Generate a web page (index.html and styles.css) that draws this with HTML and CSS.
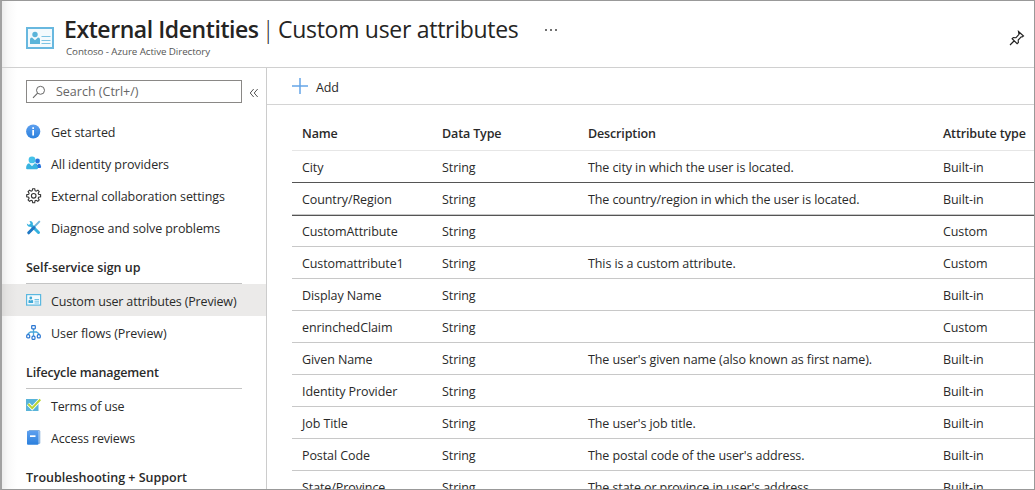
FILE: index.html
```html
<!DOCTYPE html>
<html lang="en">
<head>
<meta charset="utf-8">
<title>External Identities | Custom user attributes</title>
<link rel="stylesheet" href="styles.css">
</head>
<body>
<div class="window">
  <header class="header">
    <svg class="header-icon" viewBox="0 0 28 22"><rect x="1" y="1" width="26" height="20" fill="#f3fafd" stroke="#68b8df" stroke-width="2"/><circle cx="9" cy="7.500" r="2.700" fill="#59b4d9"/><path d="M4 17v-4.500q0-2 2-2l3 2.700 3-2.700q2 0 2 2V17z" fill="#59b4d9"/><path d="M15.500 9.500h9M15.500 13.500h9M15.500 16.500h9" stroke="#7cc3e3" stroke-width="1.200"/></svg>
    <div class="titles">
      <h1 class="title"><span class="title-main">External Identities</span><span class="title-bar">|</span><span class="title-sub">Custom user attributes</span></h1>
      <div class="subtitle">Contoso - Azure Active Directory</div>
    </div>
    <svg class="more" viewBox="0 0 14 4"><path d="M1 1.200h2v1.500H1zM6 1.200h2v1.500H6zM11 1.200h2v1.500h-2z" fill="#444"/></svg>
    <svg class="pin" viewBox="0 0 16 16"><path d="M9.500 1.500l5 4.500-1.300 1-1-.2-3 3.200.2 2.500-1.300 1.200-5-5 1.200-1.200 2.700.2 3-3.300-.3-1.500zM5.500 10.500L1 15" fill="none" stroke="#222" stroke-width="1.150"/></svg>
  </header>
  <div class="body">
    <nav class="sidebar">
      <div class="search-row">
        <div class="search"><svg class="search-icon" viewBox="0 0 14 14"><circle cx="8.500" cy="5.300" r="4" fill="none" stroke="#666" stroke-width="1"/><path d="M5.600 8.200L1 12.800" stroke="#666" stroke-width="1.100"/></svg><span class="placeholder">Search (Ctrl+/)</span></div>
        <svg class="collapse" viewBox="0 0 10 10"><path d="M4.700 1L1.200 5l3.500 4M8.700 1L5.200 5l3.500 4" fill="none" stroke="#555" stroke-width="1"/></svg>
      </div>
      <ul class="menu">
        <li class="item"><svg class="icon" viewBox="0 0 16 16"><defs><linearGradient id="blue" x2="0" y2="1"><stop stop-color="#5ea0ef"/><stop offset="1" stop-color="#2b80dd"/></linearGradient></defs><circle cx="7.200" cy="7.500" r="7.100" fill="url(#blue)"/><path d="M6.300 3.300h1.700V5H6.300zM6.300 6h1.700v5.500H6.300z" fill="#fff"/></svg><span>Get started</span></li>
        <li class="item"><svg class="icon" viewBox="0 0 16 16"><circle cx="11.500" cy="5" r="2.400" fill="#2874dd"/><path d="M8 12V10q.4-2.300 2.300-2.500l1.200 1.500L12.800 7.500q2 .2 2.300 3v.5q0 1-1 1z" fill="#2874dd"/><circle cx="6" cy="3.900" r="3.400" fill="#45c1e8"/><path d="M.1 12.200q0-4.200 3-5L6 10l2.800-2.800q2.900.8 3.100 5 0 1-1 1H1.100q-1 0-1-1z" fill="#39b3e0"/><path d="M4.400 7.500L6 10l1.600-2.500z" fill="#d9f4fc"/></svg><span>All identity providers</span></li>
        <li class="item"><svg class="icon" viewBox="0 0 16 16"><path d="M6.700.7h2l.4 2 1 .5 1.800-1 1.300 1.300-1 1.800.4 1 2 .5v2l-2 .4-.4 1 1 1.700-1.400 1.400-1.700-1-1 .4-.4 2h-2l-.5-2-1-.4-1.700 1-1.400-1.400 1-1.700-.4-1-2-.4v-2l2-.5.4-1-1-1.800 1.400-1.300 1.700 1 1-.5z" fill="none" stroke="#333" stroke-width="1.100"/><circle cx="7.700" cy="7.800" r="2.300" fill="none" stroke="#333" stroke-width="1.100"/></svg><span>External collaboration settings</span></li>
        <li class="item"><svg class="icon" viewBox="0 0 16 16"><path d="M5 5l7.500 7.500" stroke="#35b1df" stroke-width="3" stroke-linecap="round"/><path d="M3.500 1q3.200-.2 3.500 3L4.500 6.800Q1.100 6.800.8 3.400l2.200 1.500 1.700-1.200z" fill="#35b1df"/><path d="M13.800 1.200L7.500 7.500" stroke="#71b6dc" stroke-width="1.900"/><path d="M8 7.500l-5.300 5.300" stroke="#1f78c4" stroke-width="3" stroke-linecap="round"/></svg><span>Diagnose and solve problems</span></li>
      </ul>
      <h2 class="group group-self">Self-service sign up</h2>
      <ul class="menu menu-sub">
        <li class="item active"><svg class="icon" viewBox="0 0 16 16"><rect x=".6" y="1.600" width="14" height="10.500" fill="#f3fafd" stroke="#5bb8e0" stroke-width="1.200"/><circle cx="4.800" cy="5" r="1.400" fill="#3fa9d6"/><path d="M2.500 10V7.500l1.200-.8 1.100 1 1.100-1 1.200.8V10z" fill="#3fa9d6"/><path d="M8.500 6.500h4.500M8.500 8.200h4.500M8.500 10h4.500" stroke="#6dc1e5"/></svg><span class="narrow">Custom user attributes (Preview)</span></li>
        <li class="item"><svg class="icon" viewBox="0 0 16 16"><path d="M7.500 4v7M2.200 10V8.700L4.500 7h6l2.300 1.700V10" fill="none" stroke="#49a7dc" stroke-width="1.300"/><g fill="#fff" stroke="#2b77d2" stroke-width="1.200"><rect x="5.700" y=".6" width="3.600" height="3.200" rx=".5"/><rect x=".7" y="9.700" width="3" height="3.200" rx="1"/><rect x="6" y="11.200" width="3" height="3.200" rx="1"/><rect x="11.300" y="9.700" width="3" height="3.200" rx="1"/></g></svg><span>User flows (Preview)</span></li>
      </ul>
      <h2 class="group group-life">Lifecycle management</h2>
      <ul class="menu menu-sub">
        <li class="item"><svg class="icon" viewBox="0 0 16 16"><rect y="1" width="12.500" height="12" fill="#59b4d9"/><path d="M2.200 6l4 4.200L14.300 1.500" fill="none" stroke="#fff" stroke-width="3.600"/><path d="M2.200 6l4 4.200L14.300 1.500" fill="none" stroke="#b8d432" stroke-width="1.900"/></svg><span class="narrow">Terms of use</span></li>
        <li class="item"><svg class="icon" viewBox="0 0 16 16"><path d="M3 .5h10q.8 0 .8.8v12H12" fill="#b7d4f3" stroke="#6f9fd3" stroke-width=".8"/><path d="M1 1.700q0-1 1-1h9.500q1 0 1 1V13.700q0 1-1 1H2q-1 0-1-1z" fill="url(#blue)"/><path d="M4 5.300h5.500v1.700H4z" fill="#fff"/></svg><span class="narrow">Access reviews</span></li>
      </ul>
      <h2 class="group group-last">Troubleshooting + Support</h2>
    </nav>
    <main class="content">
      <div class="toolbar"><svg class="plus" viewBox="0 0 16 16"><path d="M8 0v16M0 8h16" stroke="#65a5e8" stroke-width="1.500"/></svg><span>Add</span></div>
      <div class="table">
        <div class="row head"><span>Name</span><span>Data Type</span><span>Description</span><span>Attribute type</span></div>
        <div class="row dark"><span>City</span><span>String</span><span>The city in which the user is located.</span><span>Built-in</span></div>
        <div class="row"><span>Country/Region</span><span>String</span><span>The country/region in which the user is located.</span><span>Built-in</span></div>
        <div class="row after"><span>CustomAttribute</span><span>String</span><span></span><span>Custom</span></div>
        <div class="row"><span>Customattribute1</span><span>String</span><span>This is a custom attribute.</span><span>Custom</span></div>
        <div class="row"><span>Display Name</span><span>String</span><span></span><span>Built-in</span></div>
        <div class="row"><span>enrinchedClaim</span><span>String</span><span></span><span>Custom</span></div>
        <div class="row"><span>Given Name</span><span>String</span><span>The user's given name (also known as first name).</span><span>Built-in</span></div>
        <div class="row"><span>Identity Provider</span><span>String</span><span></span><span>Built-in</span></div>
        <div class="row"><span>Job Title</span><span>String</span><span>The user's job title.</span><span>Built-in</span></div>
        <div class="row"><span>Postal Code</span><span>String</span><span>The postal code of the user's address.</span><span>Built-in</span></div>
        <div class="row"><span>State/Province</span><span>String</span><span>The state or province in user's address.</span><span>Built-in</span></div>
      </div>
    </main>
  </div>
</div>
</body>
</html>
```
FILE: styles.css
```css
* { box-sizing: border-box; }
body { margin: 0; background: #fff; }
.window {
  width: 1035px; height: 490px; overflow: hidden;
  display: flex; flex-direction: column;
  border: 1px solid #999; border-left: 2px solid #a2a2a2;
  background: linear-gradient(90deg, #ededed 0, #f9f9f9 6px, #fff 15px);
  font-family: "Open Sans", "Noto Sans", sans-serif;
  font-size: 12.5px; letter-spacing: -0.09px; color: #2a2a2a;
}
h1, h2, ul { margin: 0; padding: 0; list-style: none; font-weight: 400; }
svg { display: block; flex: none; }
span { white-space: nowrap; }
.header { height: 67px; flex: none; display: flex; align-items: flex-start; border-bottom: 1px solid #d0d0d0; padding-left: 24px; }
.header-icon { width: 28px; height: 22px; margin-top: 26px; }
.titles { margin: 12px 0 0 10px; width: 457px; }
.title { display: flex; font-size: 23px; line-height: 32px; color: #252423; }
.title-main { font-weight: 600; width: 198px; letter-spacing: -0.43px; }
.title-bar { width: 16px; font-weight: 300; }
.title-sub { letter-spacing: -0.29px; }
.subtitle { font-size: 9.8px; line-height: 12px; color: #555; margin-top: 1px; padding-left: 2px; }
.more { width: 14px; height: 4px; margin: 27px 0 0 23px; }
.pin { width: 16px; height: 16px; margin: 29px 9px 0 auto; }
.body { flex: 1; min-height: 0; display: flex; }
.sidebar { width: 265px; flex: none; border-right: 1px solid #ccc; padding-top: 12px; }
.content { flex: 1; min-width: 0; }
.search-row { display: flex; align-items: center; height: 23px; margin: 0 0 13px 24px; }
.search { width: 216px; height: 23px; border: 1px solid #8a8886; background: #fff; display: flex; align-items: center; padding-left: 5px; color: #666; }
.search-icon { width: 14px; height: 14px; margin-right: 10px; }
.placeholder { letter-spacing: 0; }
.collapse { width: 10px; height: 10px; margin: 3px 0 0 7px; }
.item { height: 32px; display: flex; align-items: center; padding-left: 24px; }
.icon { width: 16px; height: 16px; margin-right: 9px; }
.narrow { letter-spacing: -0.16px; }
.menu-sub .item { padding-top: 2px; }
.active { background: rgba(90, 80, 70, .12); }
.group { font-size: 12.5px; font-weight: 600; letter-spacing: -0.14px; line-height: 18px; width: 216px; margin-left: 24px; border-bottom: 1px solid #c4c4c4; white-space: nowrap; }
.group-self { height: 40px; padding-top: 15px; letter-spacing: -0.03px; }
.group-life { height: 41px; padding-top: 16px; }
.group-last { padding-top: 16px; border-bottom: 0; letter-spacing: 0; }
.toolbar { height: 37px; border-bottom: 1px solid #d4d4d4; display: flex; align-items: center; padding: 3px 0 0 25px; }
.plus { width: 16px; height: 16px; margin-right: 8px; margin-top: -4px; }
.table { padding: 13px 0 0 25px; }
.row { height: 32px; display: grid; grid-template-columns: 140px 146px 355px 1fr; align-items: center; border-bottom: 1px solid #c8c8c8; padding: 2px 0 0 10px; }
.head { height: 33px; font-weight: 600; letter-spacing: -0.14px; padding-top: 0; padding-bottom: 2px; border-bottom-color: #e6e6e6; }
.dark { border-bottom-color: #555; }
.after { border-top: 1px solid #555; padding-top: 0; }
```
